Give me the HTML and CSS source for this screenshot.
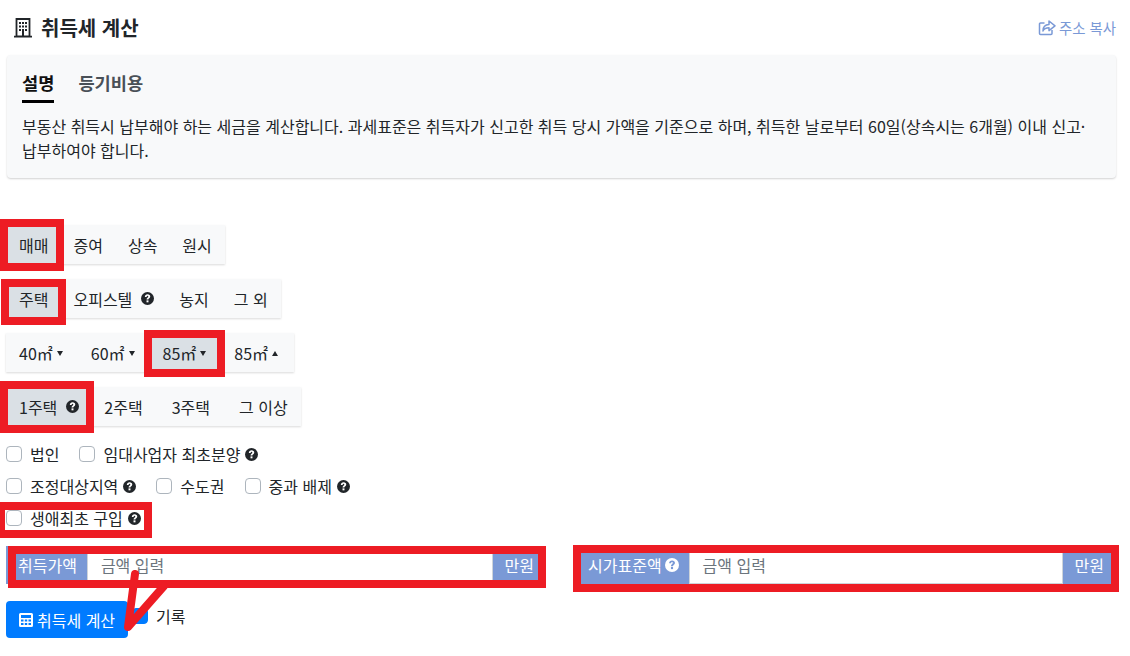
FILE: index.html
```html
<!DOCTYPE html>
<html lang="ko">
<head>
    <meta charset="UTF-8">
    <meta name="viewport" content="width=device-width, initial-scale=1.0">
    <title>취득세 계산</title>
    <link rel="stylesheet" href="styles.css">
</head>
<body>
    <svg class="icon-defs" width="0" height="0">
        <symbol id="q" viewBox="0 0 16 16">
            <circle cx="8" cy="8" r="8" fill="currentColor"/>
            <path class="q-mark" d="M4.700 6c.1-2 1.500-3.200 3.400-3.200 2 0 3.300 1.200 3.300 2.800 0 2.100-2.300 2.300-2.300 3.700H6.800c0-2.400 2.200-2.500 2.200-3.600 0-.6-.4-1-1-1s-1 .4-1.100 1.300z"/>
            <rect class="q-mark" x="6.800" y="10.300" width="2.400" height="2.400"/>
        </symbol>
    </svg>

    <div class="page">
        <header class="top">
            <h1 class="title">
                <svg class="title-icon" viewBox="0 0 18 20" width="18" height="20">
                    <path d="M2.500 1h13v17.500h-13zM0 18.700h18" fill="none" stroke="#212529" stroke-width="1.800"/>
                    <path d="M5 4h2v2H5zM8 4h2v2H8zM11 4h2v2h-2zM5 7.500h2v2H5zM8 7.500h2v2H8zM11 7.500h2v2h-2zM5 11h2v2H5zM11 11h2v2h-2zM8 11h2v7H8z" fill="#212529"/>
                </svg>
                취득세 계산
            </h1>
            <a class="copy-link">
                <svg viewBox="0 0 18 16" width="18" height="16">
                    <path d="M14 10v3.500a1 1 0 0 1-1 1H2.500a1 1 0 0 1-1-1V4a1 1 0 0 1 1-1h4" fill="none" stroke="currentColor" stroke-width="1.500"/>
                    <path d="M11 1l6 4.800-6 4.800V7.800C8 7.800 6 8.600 5 11c0-4 2.400-6.300 6-6.400z" fill="none" stroke="currentColor" stroke-width="1.500" stroke-linejoin="round"/>
                </svg>
                주소 복사
            </a>
        </header>

        <section class="info-card">
            <div class="tabs">
                <span class="tab tab-active">설명</span>
                <span class="tab">등기비용</span>
            </div>
            <p class="info-text">부동산 취득시 납부해야 하는 세금을 계산합니다. 과세표준은 취득자가 신고한 취득 당시 가액을 기준으로 하며, 취득한 날로부터 60일(상속시는 6개월) 이내 신고·<br>납부하여야 합니다.</p>
        </section>

        <div class="btn-group">
            <span class="opt active">매매</span>
            <span class="opt">증여</span>
            <span class="opt">상속</span>
            <span class="opt">원시</span>
        </div>
        <div class="btn-group">
            <span class="opt active">주택</span>
            <span class="opt">오피스텔<svg class="q q-wide"><use href="#q"/></svg></span>
            <span class="opt">농지</span>
            <span class="opt">그 외</span>
        </div>
        <div class="btn-group">
            <span class="opt">40㎡<i class="caret"></i></span>
            <span class="opt">60㎡<i class="caret"></i></span>
            <span class="opt active">85㎡<i class="caret"></i></span>
            <span class="opt">85㎡<i class="caret caret-up"></i></span>
        </div>
        <div class="btn-group btn-group-last">
            <span class="opt active">1주택<svg class="q q-wide"><use href="#q"/></svg></span>
            <span class="opt opt-spaced">2주택</span>
            <span class="opt opt-spaced">3주택</span>
            <span class="opt">그 이상</span>
        </div>

        <div class="check-row">
            <label class="check"><span class="box"></span>법인</label>
            <label class="check"><span class="box"></span>임대사업자 최초분양<svg class="q"><use href="#q"/></svg></label>
        </div>
        <div class="check-row">
            <label class="check"><span class="box"></span>조정대상지역<svg class="q"><use href="#q"/></svg></label>
            <label class="check"><span class="box"></span>수도권</label>
            <label class="check"><span class="box"></span>중과 배제<svg class="q"><use href="#q"/></svg></label>
        </div>
        <div class="check-row">
            <label class="check"><span class="box"></span>생애최초 구입<svg class="q"><use href="#q"/></svg></label>
        </div>

        <div class="amount-row">
            <div class="input-group">
                <span class="addon addon-first">취득가액</span>
                <span class="field">금액 입력</span>
                <span class="addon">만원</span>
            </div>
            <div class="input-group">
                <span class="addon addon-first">시가표준액<svg class="q q-light"><use href="#q"/></svg></span>
                <span class="field">금액 입력</span>
                <span class="addon">만원</span>
            </div>
        </div>

        <div class="submit-row">
            <button class="calc-btn">
                <svg viewBox="0 0 14 16" width="14" height="16">
                    <path fill-rule="evenodd" d="M1.500 1h11A1.500 1.500 0 0 1 14 2.500v11a1.500 1.500 0 0 1-1.500 1.500h-11A1.500 1.500 0 0 1 0 13.500v-11A1.500 1.500 0 0 1 1.500 1zM2 3v3h10V3zM2 7.500v2h2.500v-2zM5.800 7.500v2h2.400v-2zM9.500 7.500v2H12v-2zM2 11v2h2.500v-2zM5.800 11v2h2.400v-2zM9.500 11v2H12v-2z" fill="#fff"/>
                </svg>
                취득세 계산
            </button>
            <label class="check record"><span class="box box-on"></span>기록</label>
        </div>

        <!-- 스크린샷에 덧그려진 빨간 표시 -->
        <div class="mark" style="left:0;top:219px;width:64px;height:52px"></div>
        <div class="mark" style="left:1px;top:279px;width:65px;height:46px"></div>
        <div class="mark" style="left:144px;top:330px;width:81px;height:47px"></div>
        <div class="mark" style="left:0;top:381px;width:94px;height:52px"></div>
        <div class="mark" style="left:0;top:502px;width:152px;height:36px;border-left-width:5px"></div>
        <div class="mark" style="left:8px;top:546px;width:538px;height:42px"></div>
        <div class="mark" style="left:573px;top:545px;width:546px;height:47px"></div>
        <svg class="scribble" viewBox="0 0 1130 656" width="1130" height="656">
            <path d="M135 574l-7 53 36-41" fill="none" stroke="#ed1c24" stroke-width="8" stroke-linecap="round" stroke-linejoin="round"/>
        </svg>
    </div>
</body>
</html>
```

FILE: styles.css
```css
* {
    box-sizing: border-box;
}
body {
    margin: 0;
    background-color: #fff;
    color: #212529;
    font-family: "Noto Sans CJK KR", "Noto Sans", sans-serif;
    font-size: 16px;
    line-height: 24px;
}
.icon-defs {
    position: absolute;
}
.page {
    position: relative;
    width: 1130px;
    height: 656px;
    overflow: hidden;
    padding: 0 14px 0 6px;
}
.top {
    display: flex;
    justify-content: space-between;
    align-items: center;
    height: 55px;
}
.title {
    display: flex;
    align-items: center;
    gap: 9px;
    margin: 0 0 0 8px;
    font-size: 20px;
    font-weight: 700;
    color: #212529;
}
.copy-link {
    display: flex;
    align-items: center;
    gap: 3px;
    font-size: 14.4px;
    color: #7a99d6;
}
.q-mark {
    fill: var(--q-mark, #fff);
}
.info-card {
    height: 123px;
    margin-left: 1px;
    padding: 10px 15px;
    background-color: #f8f9fa;
    border-radius: 4px;
    box-shadow: 0 1px 2px rgba(0,0,0,0.18);
}
.tabs {
    display: flex;
    gap: 24px;
    font-size: 17.6px;
    font-weight: 700;
}
.tab {
    height: 38px;
    padding-top: 6px;
    color: #495057;
}
.tab-active {
    color: #111;
    border-bottom: 3px solid #000;
}
.info-text {
    margin: 11px 0 0;
}
.btn-group {
    display: flex;
    width: fit-content;
    height: 39px;
    margin-bottom: 15px;
    background-color: #f8f9fa;
    box-shadow: 0 1px 2px rgba(0,0,0,0.15);
}
.btn-group-last {
    margin-bottom: 12px;
}
.info-card + .btn-group {
    margin-top: 47px;
}
.opt {
    display: flex;
    align-items: center;
    padding: 0 13px;
    color: #212529;
    white-space: nowrap;
}
.opt + .opt {
    margin-left: -1px;
}
.opt-spaced {
    padding-right: 17px;
}
.active {
    background-color: #dae0e5;
}
.caret {
    width: 0;
    height: 0;
    margin: 2px 3px 0 4px;
    border-left: 3px solid transparent;
    border-right: 3px solid transparent;
    border-top: 5px solid #212529;
}
.caret-up {
    border-top: 0;
    border-bottom: 5px solid #212529;
}
.q {
    flex: none;
    width: 13px;
    height: 13px;
    color: #212529;
}
.check .q {
    margin-left: -3px;
}
.q-wide {
    margin-left: 9px;
}
.q-light {
    --q-mark: #7a99d6;
    width: 14px;
    height: 14px;
    margin-left: 3px;
    color: #fff;
}
.check-row {
    display: flex;
    gap: 20px;
    height: 32px;
    align-items: center;
}
.check {
    display: flex;
    align-items: center;
    gap: 8px;
}
.box {
    flex: none;
    width: 16px;
    height: 16px;
    background-color: #fff;
    border: 1px solid #adb5bd;
    border-radius: 4px;
}
.box-on {
    background-color: #007bff;
    border-color: #007bff;
}
.amount-row {
    display: grid;
    grid-template-columns: 1fr 1fr;
    gap: 30px;
    margin-top: 12px;
}
.input-group {
    display: flex;
    height: 38px;
}
.addon {
    display: flex;
    align-items: center;
    padding: 0 12px;
    background-color: #7a99d6;
    color: #fff;
}
.addon-first {
    padding-right: 10px;
}
.field {
    display: flex;
    align-items: center;
    flex: 1;
    padding: 0 13px;
    background-color: #fff;
    border: 1px solid #ced4da;
    color: #6c757d;
}
.submit-row {
    display: flex;
    align-items: flex-start;
    gap: 4px;
    margin-top: 17px;
}
.calc-btn {
    display: flex;
    align-items: center;
    gap: 4px;
    height: 37px;
    padding: 0 13px;
    background-color: #007bff;
    color: #fff;
    border: none;
    border-radius: 4px;
    font: inherit;
}
.record {
    margin-top: 3px;
}
.mark {
    position: absolute;
    border: 8px solid #ed1c24;
}
.scribble {
    position: absolute;
    left: 0;
    top: 0;
}
```
